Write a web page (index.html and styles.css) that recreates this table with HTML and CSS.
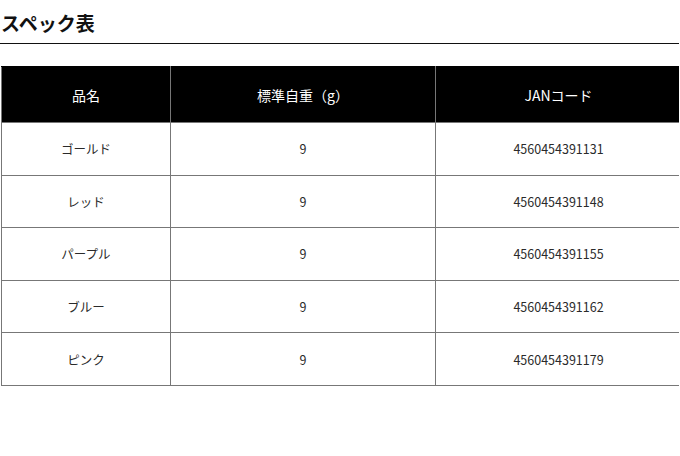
FILE: index.html
```html
<!DOCTYPE html>
<html lang="ja">
<head>
<meta charset="utf-8">
<link rel="stylesheet" href="styles.css">
</head>
<body>
<div class="page">
  <h2 class="title">スペック表</h2>
  <table class="spec">
    <colgroup>
      <col class="c1"><col class="c2"><col class="c3">
    </colgroup>
    <thead>
      <tr><th>品名</th><th>標準自重（g）</th><th>JANコード</th></tr>
    </thead>
    <tbody>
      <tr><td>ゴールド</td><td>9</td><td>4560454391131</td></tr>
      <tr><td>レッド</td><td>9</td><td>4560454391148</td></tr>
      <tr><td>パープル</td><td>9</td><td>4560454391155</td></tr>
      <tr><td>ブルー</td><td>9</td><td>4560454391162</td></tr>
      <tr><td>ピンク</td><td>9</td><td>4560454391179</td></tr>
    </tbody>
  </table>
</div>
</body>
</html>
```
FILE: styles.css
```css
html, body {
  margin: 0;
  padding: 0;
  background: #fff;
  overflow: hidden;
}
body {
  font-family: "Noto Sans CJK JP", "Noto Sans", sans-serif;
  color: #222;
}
.page {
  width: 679px;
  overflow: hidden;
}
.title {
  margin: 0;
  padding: 10px 0 8px 1px;
  font-size: 19px;
  line-height: 25px;
  font-weight: 700;
  color: #111;
  border-bottom: 1px solid #111;
}
.spec {
  margin: 22px 0 0 1px;
  width: 680px;
  border-collapse: collapse;
  table-layout: fixed;
}
.c1 { width: 169px; }
.c2 { width: 265px; }
.c3 { width: 246px; }
.spec th,
.spec td {
  border: 1px solid #777;
  text-align: center;
  vertical-align: middle;
  padding: 0;
}
.spec th {
  background: #000;
  color: #fff;
  font-size: 14px;
  font-weight: 400;
  height: 55px;
  border-top-color: #000;
}
.spec td {
  font-size: 12.5px;
  color: #2a2a2a;
  height: 51.6px;
}
```
